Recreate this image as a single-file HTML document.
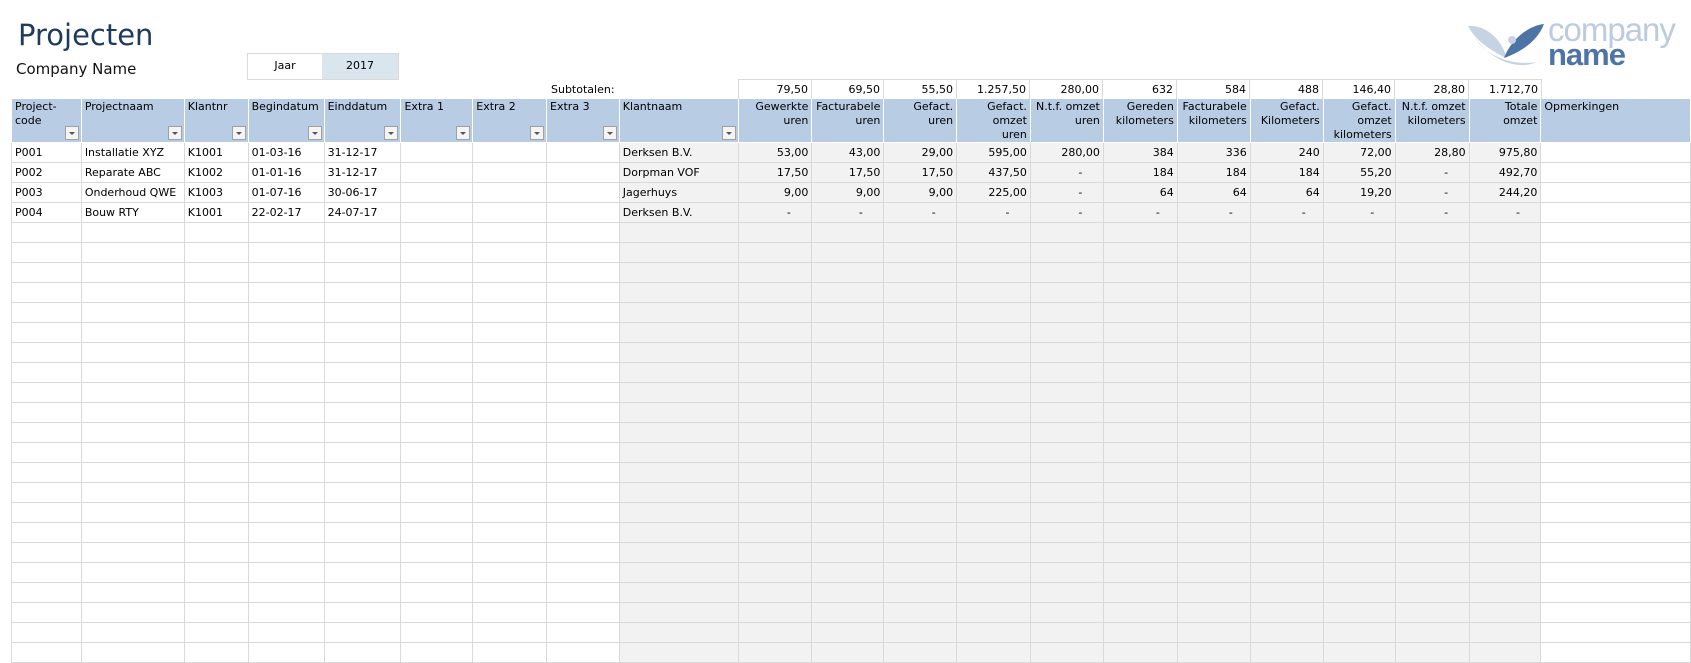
<!DOCTYPE html>
<html><head><meta charset="utf-8"><style>
body{margin:0;width:1691px;height:647px;overflow:hidden;background:#fff;font-family:"DejaVu Sans","Liberation Sans",sans-serif;font-size:11px;color:#000;position:relative}
.abs{position:absolute}
table{position:absolute;left:11px;top:99px;border-collapse:collapse;table-layout:fixed}
td{border:1px solid #d9d9d9;height:20px;padding:0 3px;white-space:nowrap;overflow:hidden;vertical-align:middle;box-sizing:border-box}
td.r{text-align:right}
td.g{background:#f2f2f2}
tr.h td{background:#b8cce4;border:1px solid #fff;border-top:none;height:42px;vertical-align:top;white-space:nowrap;line-height:14px;padding-top:1px;position:relative}
.f{position:absolute;right:2px;bottom:2px;width:14px;height:14px;background:#f4f4f4;border:1px solid #a0a0a0;box-sizing:border-box}
.f:after{content:"";position:absolute;left:3px;top:5px;border-left:3px solid transparent;border-right:3px solid transparent;border-top:3px solid #555}
.sub{position:absolute;top:79px;height:20px;border:1px solid #d9d9d9;border-bottom:none;box-sizing:border-box;text-align:right;padding-right:3px;line-height:19px}
</style></head><body>
<div class="abs" style="left:18px;top:18px;font-size:29px;color:#1f3a5f">Projecten</div>
<div class="abs" style="left:16px;top:60px;font-size:15px;color:#111">Company Name</div>
<div class="abs" style="left:247px;top:53px;width:152px;height:27px;border:1px solid #d9d9d9;box-sizing:border-box"></div>
<div class="abs" style="left:322px;top:54px;width:76px;height:25px;background:#dae6ee"></div>
<div class="abs" style="left:248px;top:59px;width:74px;text-align:center">Jaar</div>
<div class="abs" style="left:322px;top:59px;width:76px;text-align:center">2017</div>
<div class="abs" style="left:551px;top:83px">Subtotalen:</div>
<div class="sub" style="left:738px;width:74px">79,50</div>
<div class="sub" style="left:811px;width:73px">69,50</div>
<div class="sub" style="left:883px;width:74px">55,50</div>
<div class="sub" style="left:956px;width:74px">1.257,50</div>
<div class="sub" style="left:1029px;width:74px">280,00</div>
<div class="sub" style="left:1102px;width:75px">632</div>
<div class="sub" style="left:1176px;width:74px">584</div>
<div class="sub" style="left:1249px;width:74px">488</div>
<div class="sub" style="left:1322px;width:73px">146,40</div>
<div class="sub" style="left:1394px;width:75px">28,80</div>
<div class="sub" style="left:1468px;width:74px">1.712,70</div>
<svg class="abs" style="left:1466px;top:22px" width="82" height="46" viewBox="0 0 82 46">
<path d="M2 4 C20 2 38 20 40 36 C28 30 10 20 2 4Z" fill="#c5d3e3"/>
<path d="M8 14 C20 36 50 44 70 40 C60 46 30 46 8 14Z" fill="#c5d3e3"/>
<path d="M78 2 C60 4 44 20 38 36 C56 30 72 18 78 2Z" fill="#4e74a6"/>
<circle cx="46" cy="18" r="4" fill="#c5d3e3"/>
</svg>
<div class="abs" style="left:1548px;top:11px;font-family:'Liberation Sans',sans-serif;font-size:33px;color:#bccbdf;letter-spacing:-1px">company</div>
<div class="abs" style="left:1548px;top:37px;font-family:'Liberation Sans',sans-serif;font-size:31px;font-weight:bold;color:#4e74a6;letter-spacing:-1px">name</div>
<table>
<colgroup><col style="width:70px"><col style="width:103px"><col style="width:64px"><col style="width:76px"><col style="width:77px"><col style="width:72px"><col style="width:74px"><col style="width:73px"><col style="width:119px"><col style="width:74px"><col style="width:72px"><col style="width:73px"><col style="width:74px"><col style="width:73px"><col style="width:74px"><col style="width:73px"><col style="width:73px"><col style="width:72px"><col style="width:74px"><col style="width:72px"><col style="width:150px"></colgroup>
<tr class="h"><td>Project-<br>code<span class="f"></span></td><td>Projectnaam<span class="f"></span></td><td>Klantnr<span class="f"></span></td><td>Begindatum<span class="f"></span></td><td>Einddatum<span class="f"></span></td><td>Extra 1<span class="f"></span></td><td>Extra 2<span class="f"></span></td><td>Extra 3<span class="f"></span></td><td>Klantnaam<span class="f"></span></td><td class="r">Gewerkte<br>uren</td><td class="r">Facturabele<br>uren</td><td class="r">Gefact.<br>uren</td><td class="r">Gefact.<br>omzet<br>uren</td><td class="r">N.t.f. omzet<br>uren</td><td class="r">Gereden<br>kilometers</td><td class="r">Facturabele<br>kilometers</td><td class="r">Gefact.<br>Kilometers</td><td class="r">Gefact.<br>omzet<br>kilometers</td><td class="r">N.t.f. omzet<br>kilometers</td><td class="r">Totale<br>omzet</td><td>Opmerkingen</td></tr>
<tr><td>P001</td><td>Installatie XYZ</td><td>K1001</td><td>01-03-16</td><td>31-12-17</td><td></td><td></td><td></td><td class="g">Derksen B.V.</td><td class="g r">53,00</td><td class="g r">43,00</td><td class="g r">29,00</td><td class="g r">595,00</td><td class="g r">280,00</td><td class="g r">384</td><td class="g r">336</td><td class="g r">240</td><td class="g r">72,00</td><td class="g r">28,80</td><td class="g r">975,80</td><td></td></tr>
<tr><td>P002</td><td>Reparate ABC</td><td>K1002</td><td>01-01-16</td><td>31-12-17</td><td></td><td></td><td></td><td class="g">Dorpman VOF</td><td class="g r">17,50</td><td class="g r">17,50</td><td class="g r">17,50</td><td class="g r">437,50</td><td class="g r">-&nbsp;&nbsp;&nbsp;&nbsp;&nbsp;</td><td class="g r">184</td><td class="g r">184</td><td class="g r">184</td><td class="g r">55,20</td><td class="g r">-&nbsp;&nbsp;&nbsp;&nbsp;&nbsp;</td><td class="g r">492,70</td><td></td></tr>
<tr><td>P003</td><td>Onderhoud QWE</td><td>K1003</td><td>01-07-16</td><td>30-06-17</td><td></td><td></td><td></td><td class="g">Jagerhuys</td><td class="g r">9,00</td><td class="g r">9,00</td><td class="g r">9,00</td><td class="g r">225,00</td><td class="g r">-&nbsp;&nbsp;&nbsp;&nbsp;&nbsp;</td><td class="g r">64</td><td class="g r">64</td><td class="g r">64</td><td class="g r">19,20</td><td class="g r">-&nbsp;&nbsp;&nbsp;&nbsp;&nbsp;</td><td class="g r">244,20</td><td></td></tr>
<tr><td>P004</td><td>Bouw RTY</td><td>K1001</td><td>22-02-17</td><td>24-07-17</td><td></td><td></td><td></td><td class="g">Derksen B.V.</td><td class="g r">-&nbsp;&nbsp;&nbsp;&nbsp;&nbsp;</td><td class="g r">-&nbsp;&nbsp;&nbsp;&nbsp;&nbsp;</td><td class="g r">-&nbsp;&nbsp;&nbsp;&nbsp;&nbsp;</td><td class="g r">-&nbsp;&nbsp;&nbsp;&nbsp;&nbsp;</td><td class="g r">-&nbsp;&nbsp;&nbsp;&nbsp;&nbsp;</td><td class="g r">-&nbsp;&nbsp;&nbsp;&nbsp;</td><td class="g r">-&nbsp;&nbsp;&nbsp;&nbsp;</td><td class="g r">-&nbsp;&nbsp;&nbsp;&nbsp;</td><td class="g r">-&nbsp;&nbsp;&nbsp;&nbsp;&nbsp;</td><td class="g r">-&nbsp;&nbsp;&nbsp;&nbsp;&nbsp;</td><td class="g r">-&nbsp;&nbsp;&nbsp;&nbsp;&nbsp;</td><td></td></tr>
</table>
<script>
var t=document.querySelector('table');
for(var i=0;i<22;i++){var tr=document.createElement('tr');for(var j=0;j<21;j++){var td=document.createElement('td');if(j>=8&&j<=19)td.className='g';tr.appendChild(td);}t.appendChild(tr);}
</script>
</body></html>
